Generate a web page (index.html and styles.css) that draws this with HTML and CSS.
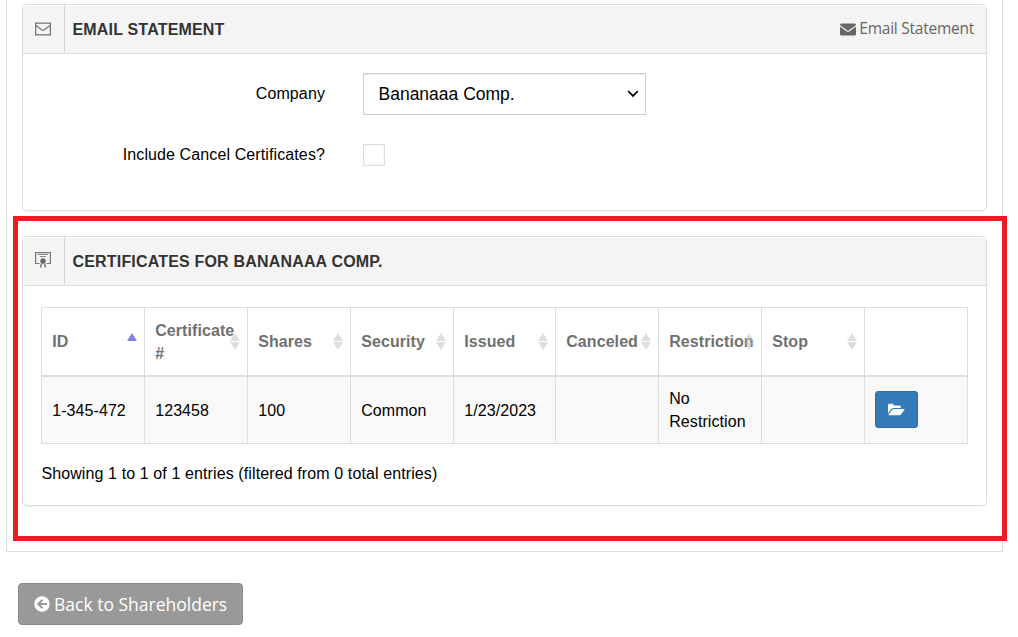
FILE: index.html
```html
<!DOCTYPE html>
<html lang="en">
<head>
<meta charset="utf-8">
<title>Shareholder Certificates</title>
<link rel="stylesheet" href="styles.css">
</head>
<body>
<main class="frame">
  <section class="panel panel-email">
    <header class="panel-head">
      <span class="head-icon">
        <svg width="16" height="14" viewBox="0 0 16 14" fill="none" stroke="#777" stroke-width="1.3"><rect x=".65" y="1.15" width="14.7" height="11.7"/><path d="M1 3.500 7 8Q8 8.700 9 8L15 3.500"/></svg>
      </span>
      <h2 class="head-title">EMAIL STATEMENT</h2>
      <a class="head-link"><svg width="16" height="13" viewBox="0 0 16 13"><path fill="#666" d="M1.5.5h13Q16 .5 16 2L9.4 7Q8 8 6.6 7L0 2Q0 .5 1.5.5ZM0 3.6 6 8q2 1.5 4 0l6-4.4V11q0 1.500-1.500 1.500h-13Q0 12.500 0 11Z"/></svg><span class="link-text">Email Statement</span></a>
    </header>
    <form class="form">
      <label class="label" for="company">Company</label>
      <div class="select" id="company"><span class="select-text">Bananaaa Comp.</span><svg width="12" height="8" viewBox="0 0 12 8" fill="none" stroke="#000" stroke-width="1.8"><path d="m1.200 1.200 4.800 4.800 4.800-4.800"/></svg></div>
      <label class="label" for="cancel">Include Cancel Certificates?</label>
      <input class="check" id="cancel" type="checkbox">
    </form>
  </section>

  <section class="panel panel-certs">
    <header class="panel-head">
      <span class="head-icon head-icon-cert">
        <svg width="16" height="16" viewBox="0 0 16 16" fill="none" stroke="#777"><path stroke-width="1.200" d="M4.500 11.500H.6V.6h14.800v10.900h-3.900"/><path d="M3 2.500h10M5 4.500h6" stroke="#888"/><circle cx="8" cy="9" r="2.700" fill="#666" stroke="none"/><path d="m6.500 11.500-.9 4M9.500 11.500l.9 4" stroke-width="1.500"/></svg>
      </span>
      <h2 class="head-title">CERTIFICATES FOR BANANAAA COMP.</h2>
    </header>
    <div class="panel-body">
      <table class="table">
        <colgroup><col class="col"><col class="col"><col class="col"><col class="col"><col class="col-narrow"><col class="col"><col class="col"><col class="col"><col class="col"></colgroup>
        <thead>
          <tr>
            <th class="sorted">ID</th><th class="sortable">Certificate #</th><th class="sortable">Shares</th><th class="sortable">Security</th><th class="sortable">Issued</th><th class="sortable">Canceled</th><th class="sortable">Restriction</th><th class="sortable">Stop</th><th></th>
          </tr>
        </thead>
        <tbody>
          <tr>
            <td>1-345-472</td><td>123458</td><td>100</td><td>Common</td><td>1/23/2023</td><td></td><td>No Restriction</td><td></td>
            <td><button class="open"><svg width="17" height="13" viewBox="0 0 17 13" fill="#fff"><path d="M0 10.500V2Q0 .7 1.300.7h3Q5.500.7 5.500 2v.4h6q1.200 0 1.200 1.200V5H5.500Q4 5 3 6.200Z"/><path d="M4 6.800Q4.700 6 5.600 6H16q1 0 .4.800l-3.200 4.500q-.8 1-1.800 1H1q-.9 0-.3-.9Z"/></svg></button></td>
          </tr>
        </tbody>
      </table>
      <p class="info">Showing 1 to 1 of 1 entries (filtered from 0 total entries)</p>
    </div>
  </section>
</main>
<a class="back"><svg width="16" height="16" viewBox="0 0 16 16"><circle cx="8" cy="8" r="7.700" fill="#fff"/><path fill="none" stroke="#999" stroke-width="2" d="M13 8H4.500M8.500 3.700 4.200 8l4.300 4.300"/></svg><span class="back-text">Back to Shareholders</span></a>
<div class="highlight"></div>
</body>
</html>
```
FILE: styles.css
```css
* { box-sizing: border-box; }
body {
  margin: 0;
  height: 637px;
  overflow: hidden;
  background: #fff;
  color: #000;
  font: 16px/23px "Liberation Sans", Arial, sans-serif;
}
.frame {
  width: 997px;
  height: 552px;
  margin-left: 6px;
  padding: 4px 15px 0;
  border: 1px solid #ddd;
  border-top: 0;
}
.panel {
  border: 1px solid #ddd;
  border-radius: 5px;
  box-shadow: 0 1px 1px rgba(0, 0, 0, .05);
}
.panel-email { height: 207px; margin-bottom: 25px; }
.panel-certs { height: 270px; }
.panel-head {
  display: flex;
  align-items: center;
  height: 49px;
  border-bottom: 1px solid #ddd;
  border-radius: 4px 4px 0 0;
  background: #f4f4f4;
  box-shadow: inset 0 1px #fff;
}
.head-icon {
  display: flex;
  align-items: center;
  align-self: stretch;
  width: 42px;
  padding-left: 12px;
  border-right: 1px solid #d5d5d5;
}
.head-icon-cert { padding-bottom: 2px; }
.head-title {
  flex: 1;
  margin: 0 0 0 7.5px;
  color: #333;
  font-size: 16px;
  line-height: 23px;
  letter-spacing: .18px;
}
.head-link {
  display: flex;
  align-items: center;
  gap: 3px;
  margin-right: 12px;
  color: #666;
  font: 15.5px/23px "Open Sans", sans-serif;
  letter-spacing: -.25px;
}
.link-text { padding-bottom: 2px; }
.form {
  display: grid;
  grid-template-columns: 302px 283px;
  grid-template-rows: 42px 22px;
  column-gap: 38px;
  row-gap: 29px;
  align-items: center;
  padding-top: 19px;
}
.label {
  padding-bottom: 2px;
  text-align: right;
  letter-spacing: .11px;
}
.select {
  display: flex;
  align-items: center;
  justify-content: space-between;
  height: 42px;
  padding: 0 6px 0 14.5px;
  border: 1px solid #ccc;
  box-shadow: inset 0 1px 1px rgba(0, 0, 0, .075);
  font-size: 17.5px;
}
.check {
  appearance: none;
  width: 22px;
  height: 22px;
  margin: 0;
  border: 1px solid #ddd;
  background: #fff;
  box-shadow: inset 0 0 0 1px #f7f7f7;
}
.panel-body { padding: 21px 18px 0; }
.table {
  width: 927px;
  table-layout: fixed;
  border-collapse: separate;
  border-spacing: 0;
  border-top: 1px solid #ddd;
  border-left: 1px solid #ddd;
  letter-spacing: .08px;
}
.col { width: 103px; }
.col-narrow { width: 102px; }
.table th,
.table td {
  padding: 0 8px 0 10.2px;
  border-right: 1px solid #ddd;
  text-align: left;
  vertical-align: middle;
}
.table th {
  height: 69px;
  border-bottom: 2px solid #ddd;
  color: #707070;
}
.table td {
  height: 67px;
  border-bottom: 1px solid #ddd;
  background: #f9f9f9;
}
.sortable,
.sorted { position: relative; }
.sortable::before,
.sortable::after,
.sorted::before {
  content: "";
  position: absolute;
  right: 7px;
  border: 5px solid transparent;
}
.sortable::before {
  top: 25px;
  border-top: 0;
  border-bottom: 8px solid rgba(190, 190, 190, .52);
}
.sortable::after {
  top: 34px;
  border-bottom: 0;
  border-top: 8px solid rgba(190, 190, 190, .52);
}
.sorted::before {
  top: 25px;
  border-top: 0;
  border-bottom: 8px solid #8080e0;
}
.open {
  display: flex;
  align-items: center;
  justify-content: center;
  width: 43px;
  height: 37px;
  margin-bottom: 1px;
  padding: 0;
  border: 1px solid #2e6da4;
  border-radius: 3px;
  background: #337ab7;
}
.info {
  margin: 18px 0 0 .4px;
  letter-spacing: .11px;
}
.back {
  display: flex;
  align-items: center;
  gap: 4px;
  width: 225px;
  height: 42px;
  margin: 31px 0 0 18px;
  padding-left: 15px;
  border: 1px solid #8b8b8b;
  border-radius: 4px;
  background: #999;
  color: #fff;
  font: 17.5px/24px "Open Sans", sans-serif;
}
.highlight {
  position: absolute;
  left: 13px;
  top: 216px;
  width: 994px;
  height: 325px;
  border: 5px solid #ed1c24;
}
.head-link,
.back,
.select-text { white-space: nowrap; }
```
